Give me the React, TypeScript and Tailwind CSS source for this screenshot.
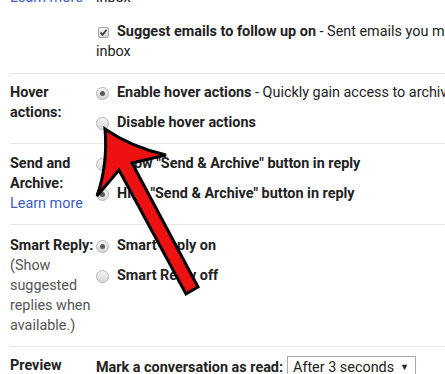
import React from "react";

function Radio({ checked }: { checked?: boolean }) {
  return (
    <span className="flex h-[13px] w-[13px] shrink-0 items-center justify-center rounded-full border border-[#b5b5b5] bg-gradient-to-b from-[#f4f4f4] to-[#d6d6d6]">
      {checked ? <span className="h-[5px] w-[5px] rounded-full bg-[#5a5a5a]" /> : null}
    </span>
  );
}

function RadioRow({ checked, children }: { checked?: boolean; children: React.ReactNode }) {
  return (
    <div className="flex h-[20px] items-center whitespace-nowrap">
      <Radio checked={checked} />
      <span className="ml-[8px]">{children}</span>
    </div>
  );
}

export default function App() {
  return (
    <div
      className="relative h-[374px] w-[445px] overflow-hidden bg-white text-[14.4px] leading-[20px] text-[#222]"
      style={{ fontFamily: "Roboto, 'Liberation Sans', Arial, sans-serif" }}
    >
      <div className="ml-[10px] -mt-[12px]">
        {/* top section */}
        <div className="flex border-b border-[#e6e6e6] pb-[11px]">
          <div className="w-[86px] shrink-0 text-[#3b5dc4]">Learn more</div>
          <div className="flex flex-col whitespace-nowrap">
            <div>inbox</div>
            <div className="mt-[14px] flex h-[20px] items-center">
              <span className="ml-[2px] flex h-[11px] w-[11px] items-center justify-center rounded-[2px] border border-[#a8a8a8] bg-gradient-to-b from-[#f2f2f2] to-[#d4d4d4]">
                <svg width="9" height="9" viewBox="0 0 9 9">
                  <path d="M1.5 4.6 L3.6 6.8 L7.6 1.8" fill="none" stroke="#333" strokeWidth="1.6" />
                </svg>
              </span>
              <span className="ml-[8px]">
                <b>Suggest emails to follow up on</b> - Sent emails you might need to follow up on will be shown at the top of your
              </span>
            </div>
            <div>inbox</div>
          </div>
        </div>

        {/* hover actions */}
        <div className="flex border-b border-[#e6e6e6] pt-[9px] pb-[10px]">
          <div className="w-[86px] shrink-0 font-bold">
            Hover
            <br />
            actions:
          </div>
          <div className="flex flex-col gap-[10px]">
            <RadioRow checked>
              <b>Enable hover actions</b> - Quickly gain access to archive, mark as read, and snooze controls on hover.
            </RadioRow>
            <RadioRow>
              <b>Disable hover actions</b>
            </RadioRow>
          </div>
        </div>

        {/* send and archive */}
        <div className="flex border-b border-[#e6e6e6] pt-[10px] pb-[10px]">
          <div className="w-[86px] shrink-0">
            <div className="font-bold">
              Send and
              <br />
              Archive:
            </div>
            <div className="text-[#3b5dc4]">Learn more</div>
          </div>
          <div className="flex flex-col gap-[10px]">
            <RadioRow>
              <b>Show "Send &amp; Archive" button in reply</b>
            </RadioRow>
            <RadioRow checked>
              <b>Hide "Send &amp; Archive" button in reply</b>
            </RadioRow>
          </div>
        </div>

        {/* smart reply */}
        <div className="flex border-b border-[#e6e6e6] pt-[11px] pb-[10px]">
          <div className="w-[86px] shrink-0">
            <div className="whitespace-nowrap font-bold">Smart Reply:</div>
            <div className="text-[#555]">
              (Show
              <br />
              suggested
              <br />
              replies when
              <br />
              available.)
            </div>
          </div>
          <div className="flex flex-col gap-[10px]">
            <RadioRow checked>
              <b>Smart Reply on</b>
            </RadioRow>
            <RadioRow>
              <b>Smart Reply off</b>
            </RadioRow>
          </div>
        </div>

        {/* preview */}
        <div className="flex pt-[9px]">
          <div className="w-[86px] shrink-0 font-bold">Preview</div>
          <div className="flex items-center whitespace-nowrap">
            <b>Mark a conversation as read:</b>
            <div className="ml-[4px] flex h-[23px] w-[129px] items-center border border-[#a9a9a9] pl-[5px] pr-[6px]">
              <span>After 3 seconds</span>
              <span className="ml-auto text-[9px] leading-none">▼</span>
            </div>
          </div>
        </div>
      </div>

      {/* red arrow overlay */}
      <svg className="pointer-events-none absolute left-0 top-0" width="445" height="374" viewBox="0 0 445 374">
        <path
          d="M105 129 Q108 165 97 196 L119 170 L186 294 L198 287 L132 163 L166 155 Q131 147 105 129 Z"
          fill="#ee1111"
          stroke="#000"
          strokeWidth="3"
          strokeLinejoin="miter"
        />
      </svg>
    </div>
  );
}
